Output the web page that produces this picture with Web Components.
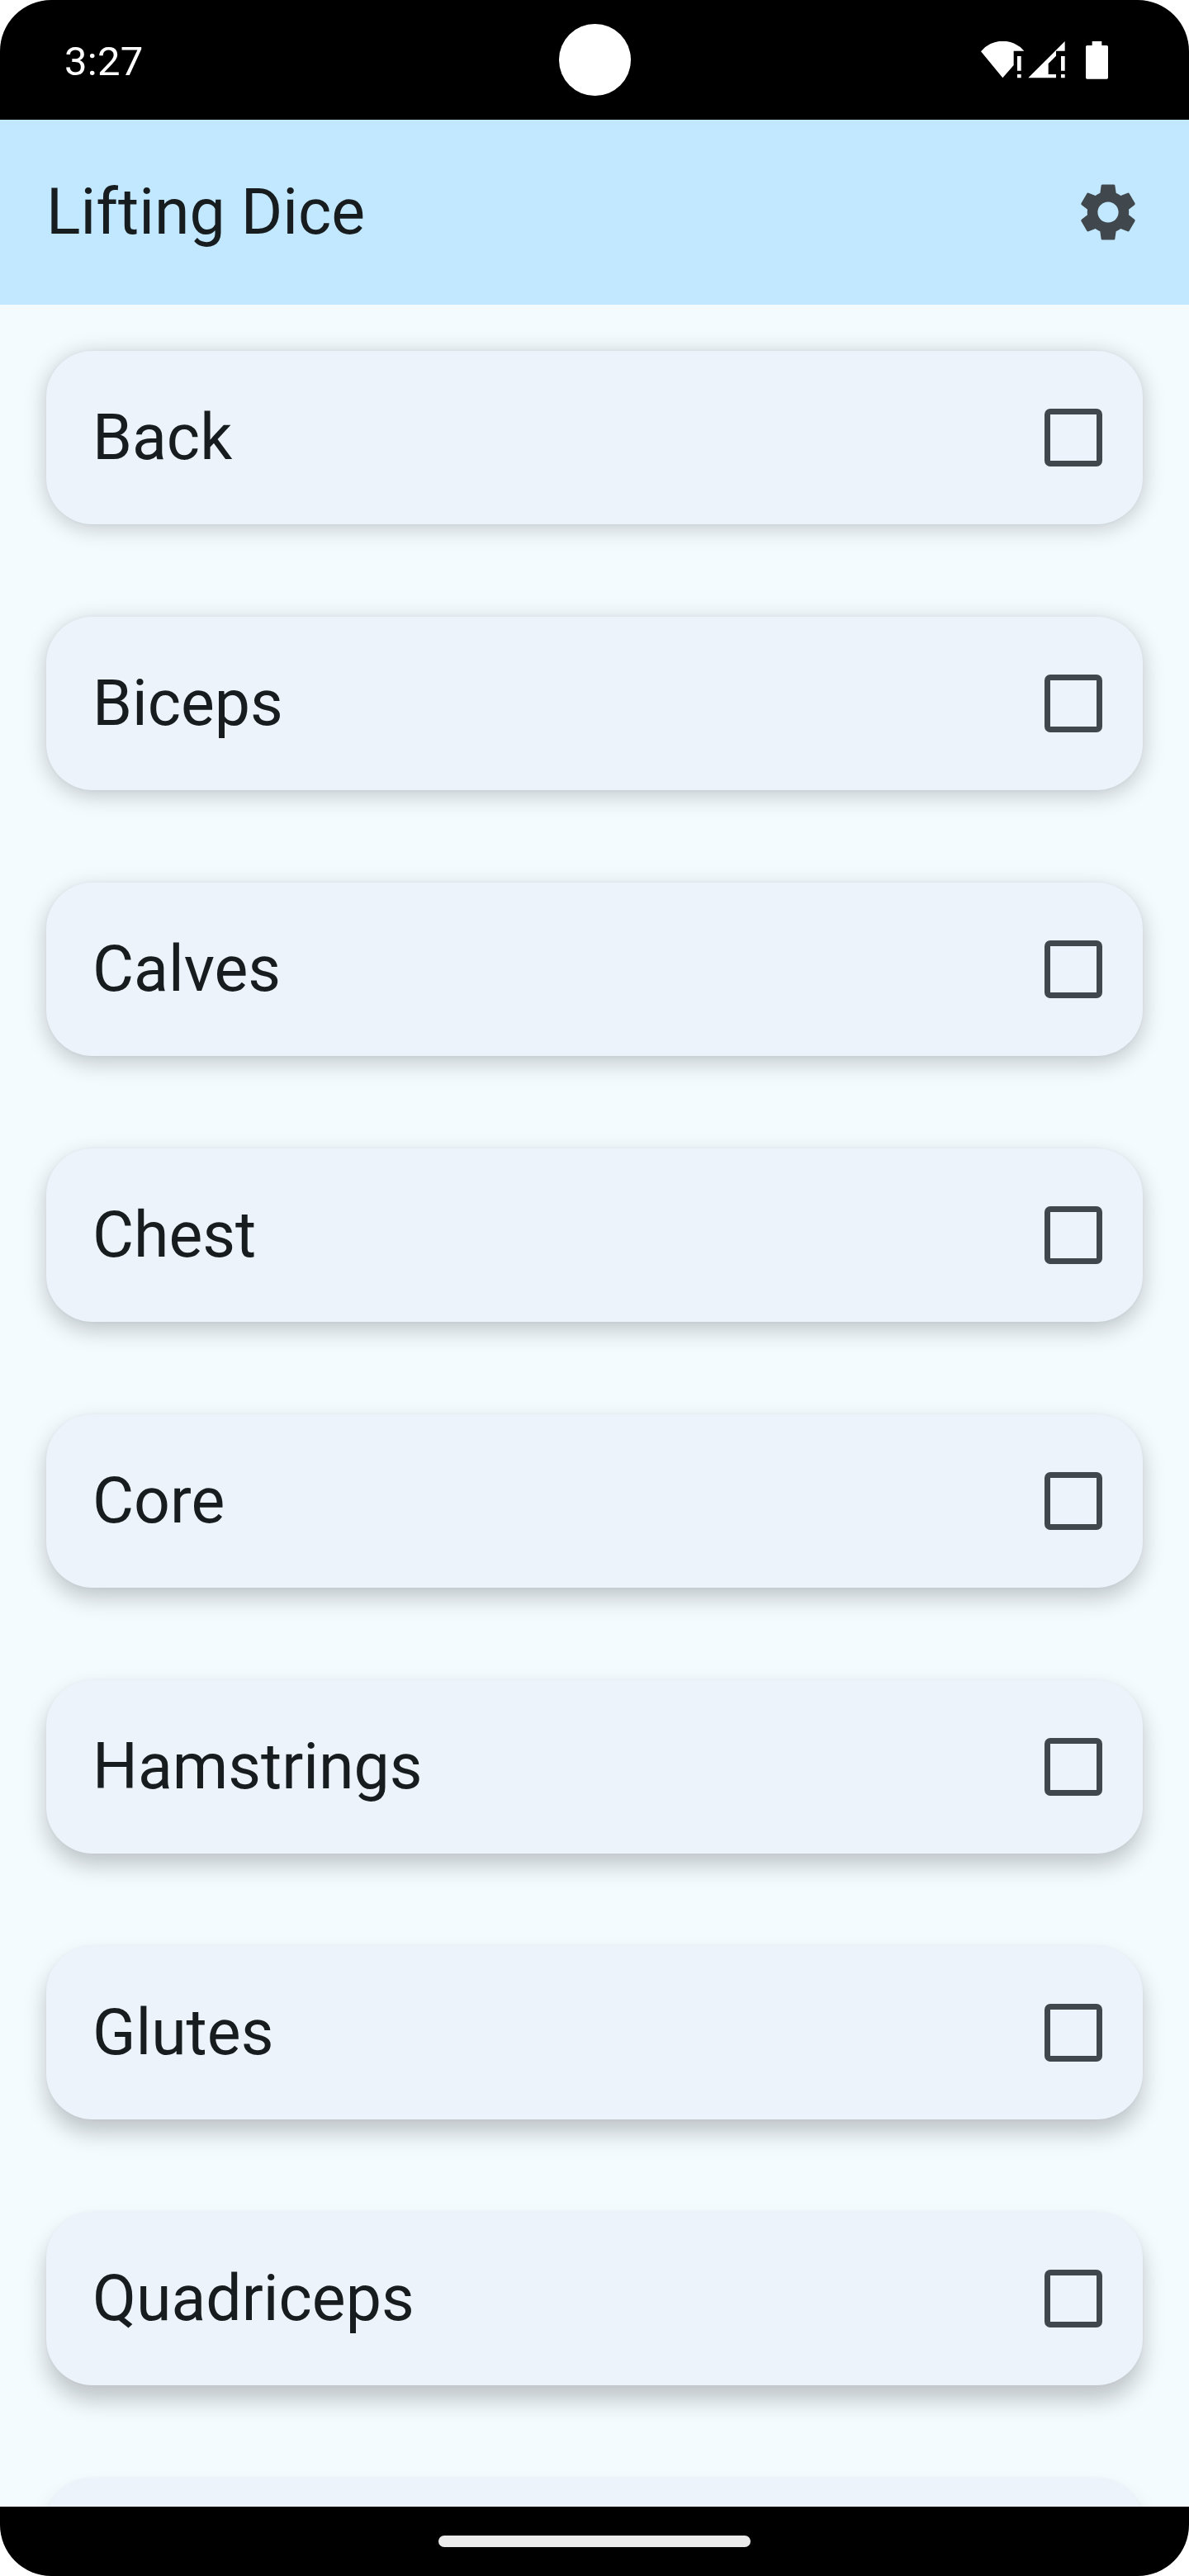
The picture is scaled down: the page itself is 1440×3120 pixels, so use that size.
<!DOCTYPE html>
<html lang="en">
<head>
<meta charset="utf-8">
<title>Lifting Dice</title>
<style>
html,body{margin:0;background:#fff}
body{font-family:Roboto,sans-serif;width:1440px;height:3120px;overflow:hidden}
</style>
</head>
<body>
<phone-screen>
  <status-bar slot="status">3:27</status-bar>
  <app-bar slot="header">Lifting Dice</app-bar>
  <muscle-card style="--drop:4px">Back</muscle-card>
  <muscle-card style="--drop:6px">Biceps</muscle-card>
  <muscle-card style="--drop:8px">Calves</muscle-card>
  <muscle-card style="--drop:10px">Chest</muscle-card>
  <muscle-card style="--drop:12px">Core</muscle-card>
  <muscle-card style="--drop:14px">Hamstrings</muscle-card>
  <muscle-card style="--drop:16px">Glutes</muscle-card>
  <muscle-card style="--drop:18px">Quadriceps</muscle-card>
  <muscle-card style="--drop:20px"></muscle-card>
  <nav-bar slot="nav"></nav-bar>
</phone-screen>
<script>
const define = (name, html) => customElements.define(name, class extends HTMLElement {
  constructor() {
    super();
    this.attachShadow({ mode: 'open' }).innerHTML = html;
  }
});

define('phone-screen', `
<style>
:host{display:flex;flex-direction:column;width:1440px;height:3120px;border-radius:62px;overflow:hidden;background:#f4fbff;color:#171c1f}
main{flex:1;min-height:0;overflow:hidden;display:flex;flex-direction:column;gap:112px;padding:56px 56px 0;box-sizing:border-box}
</style>
<slot name="status"></slot>
<slot name="header"></slot>
<main><slot></slot></main>
<slot name="nav"></slot>`);

define('status-bar', `
<style>
:host{display:grid;grid-template-columns:1fr 87px 1fr;align-items:center;height:145px;flex:none;background:#000;color:#fff;padding:0 98px 0 78px;box-sizing:border-box}
.time{font-size:49px;line-height:58px;padding-top:5px;letter-spacing:.3px}
.camera{width:86.5px;height:86.5px;border-radius:50%;background:#fff;margin-left:10.8px}
.icons{justify-self:end;width:154px;height:46px;display:block;margin-top:1px}
</style>
<span class="time"><slot></slot></span>
<div class="camera"></div>
<svg class="icons" viewBox="84 60 462 138" fill="#fff">
  <path d="M84 97A102 102 0 0 1 241 95H203V147L163 193Z"/>
  <path d="M216 114h14v53h-14zM216 180h14v13h-14zM375 114h14v53h-14zM375 180h14v13h-14z"/>
  <path d="M256 193L389 60V95H357V113L329 141V180H357V193Z"/>
  <path d="M488 60H523V75H541Q546 75 546 80V192Q546 197 541 197H470Q465 197 465 192V80Q465 75 470 75H488Z"/>
</svg>`);

define('app-bar', `
<style>
:host{display:flex;align-items:center;justify-content:space-between;flex:none;height:224px;background:#c2e8ff;padding:0 56px;box-sizing:border-box}
h1{margin:0;font-size:77px;line-height:98px;font-weight:400}
svg{width:84px;height:84px;display:block}
</style>
<h1><slot></slot></h1>
<svg viewBox="0 0 24 24" fill="#40484d"><path d="M19.14 12.94c.04-.3.06-.61.06-.94 0-.32-.02-.64-.07-.94l2.03-1.58c.18-.14.23-.41.12-.61l-1.92-3.32c-.12-.22-.37-.29-.59-.22l-2.39.96c-.5-.38-1.03-.7-1.62-.94l-.36-2.54c-.04-.24-.24-.41-.48-.41h-3.84c-.24 0-.43.17-.47.41l-.36 2.54c-.59.24-1.13.57-1.62.94l-2.39-.96c-.22-.08-.47 0-.59.22L2.74 8.87c-.12.21-.08.47.12.61l2.03 1.58c-.05.3-.09.63-.09.94s.02.64.07.94l-2.03 1.58c-.18.14-.23.41-.12.61l1.92 3.32c.12.22.37.29.59.22l2.39-.96c.5.38 1.03.7 1.62.94l.36 2.54c.05.24.24.41.48.41h3.84c.24 0 .44-.17.47-.41l.36-2.54c.59-.24 1.13-.56 1.62-.94l2.39.96c.22.08.47 0 .59-.22l1.92-3.32c.12-.22.07-.47-.12-.61l-2.01-1.58zM12 15.6c-1.98 0-3.6-1.62-3.6-3.6s1.62-3.6 3.6-3.6 3.6 1.62 3.6 3.6-1.62 3.6-3.6 3.6z"/></svg>`);

define('muscle-card', `
<style>
:host{display:flex;align-items:center;justify-content:space-between;flex:none;height:210px;border-radius:56px;background:#ecf3fb;padding:0 49px 0 56px;box-sizing:border-box;box-shadow:0 0 4px rgba(0,0,0,.03),0 var(--drop) 27px rgba(0,8,0,.22);font-size:77px;line-height:98px}
.box{width:70px;height:70px;box-sizing:border-box;border:7px solid #40484d;border-radius:7px}
</style>
<span><slot></slot></span>
<div class="box"></div>`);

define('nav-bar', `
<style>
:host{display:flex;align-items:center;justify-content:center;flex:none;height:84px;background:#000}
div{width:378px;height:14px;border-radius:7px;background:#ebebeb}
</style>
<div></div>`);
</script>
</body>
</html>
